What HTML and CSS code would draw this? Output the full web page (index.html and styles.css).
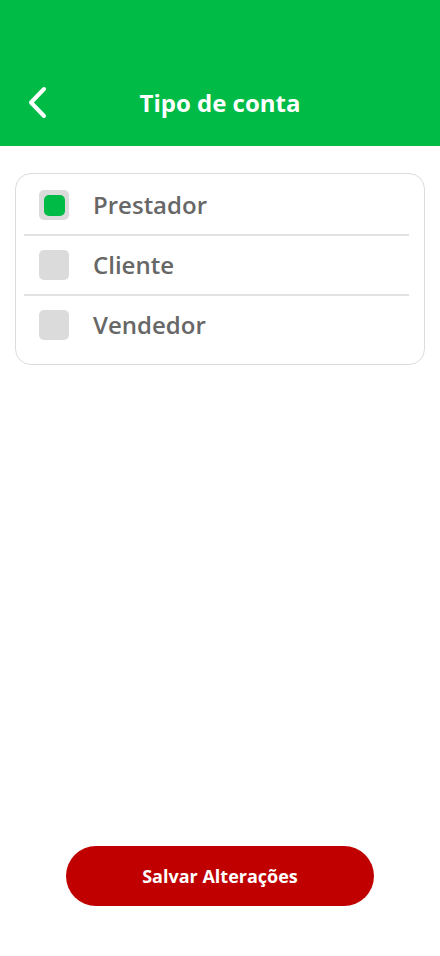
FILE: index.html
```html
<!DOCTYPE html>
<html lang="pt">
<head>
<meta charset="utf-8">
<title>Tipo de conta</title>
<link rel="stylesheet" href="styles.css">
</head>
<body>
<div class="screen">
  <header class="header">
    <button class="back" aria-label="Voltar">
      <svg width="22" height="34" viewBox="0 0 22 34" aria-hidden="true">
        <path d="M17 3 L4 16.5 L17 30" fill="none" stroke="#fff" stroke-width="4" stroke-linecap="round" stroke-linejoin="round"/>
      </svg>
    </button>
    <h1 class="title">Tipo de conta</h1>
  </header>
  <main class="content">
    <div class="card">
      <div class="row">
        <span class="check checked"><span class="dot"></span></span>
        <span class="label">Prestador</span>
      </div>
      <div class="sep"></div>
      <div class="row">
        <span class="check"></span>
        <span class="label">Cliente</span>
      </div>
      <div class="sep"></div>
      <div class="row">
        <span class="check"></span>
        <span class="label">Vendedor</span>
      </div>
    </div>
  </main>
  <footer class="footer">
    <button class="save">Salvar Alterações</button>
  </footer>
</div>
</body>
</html>
```
FILE: styles.css
```css
* { box-sizing: border-box; }
html, body { margin: 0; padding: 0; }
body {
  font-family: "Open Sans", "Noto Sans", sans-serif;
  background: #fff;
  width: 440px;
  height: 956px;
  overflow: hidden;
}
.screen {
  display: flex;
  flex-direction: column;
  height: 956px;
}
.header {
  height: 146px;
  background: #00bc47;
  display: flex;
  align-items: flex-end;
  padding: 0 0 27px 0;
  position: relative;
}
.back {
  position: absolute;
  left: 27px;
  top: 86px;
  width: 22px;
  height: 34px;
  padding: 0;
  border: 0;
  background: none;
  display: flex;
}
.title {
  flex: 1;
  margin: 0;
  text-align: center;
  color: #fff;
  font-size: 24px;
  font-weight: 700;
  line-height: 32px;
}
.content {
  flex: 1;
  padding: 27px 15px 0 15px;
}
.card {
  border: 1px solid #dcdcdc;
  border-radius: 16px;
  padding: 2px 15px 10px 8px;
}
.row {
  height: 58px;
  display: flex;
  align-items: center;
  padding-left: 15px;
  gap: 24px;
}
.sep {
  height: 2px;
  background: #e2e2e2;
}
.check {
  width: 30px;
  height: 30px;
  border-radius: 5px;
  background: #dbdbdb;
  display: flex;
  align-items: center;
  justify-content: center;
  flex: none;
}
.dot {
  width: 21px;
  height: 21px;
  border-radius: 5px;
  background: #00bc47;
}
.label {
  font-size: 24px;
  font-weight: 600;
  color: #676767;
  line-height: 32px;
}
.footer {
  display: flex;
  justify-content: center;
  padding-bottom: 50px;
}
.save {
  width: 308px;
  height: 60px;
  border: 0;
  border-radius: 30px;
  background: #c00000;
  color: #fff;
  font-family: "Open Sans", "Noto Sans", sans-serif;
  font-size: 18px;
  font-weight: 700;
}
```
